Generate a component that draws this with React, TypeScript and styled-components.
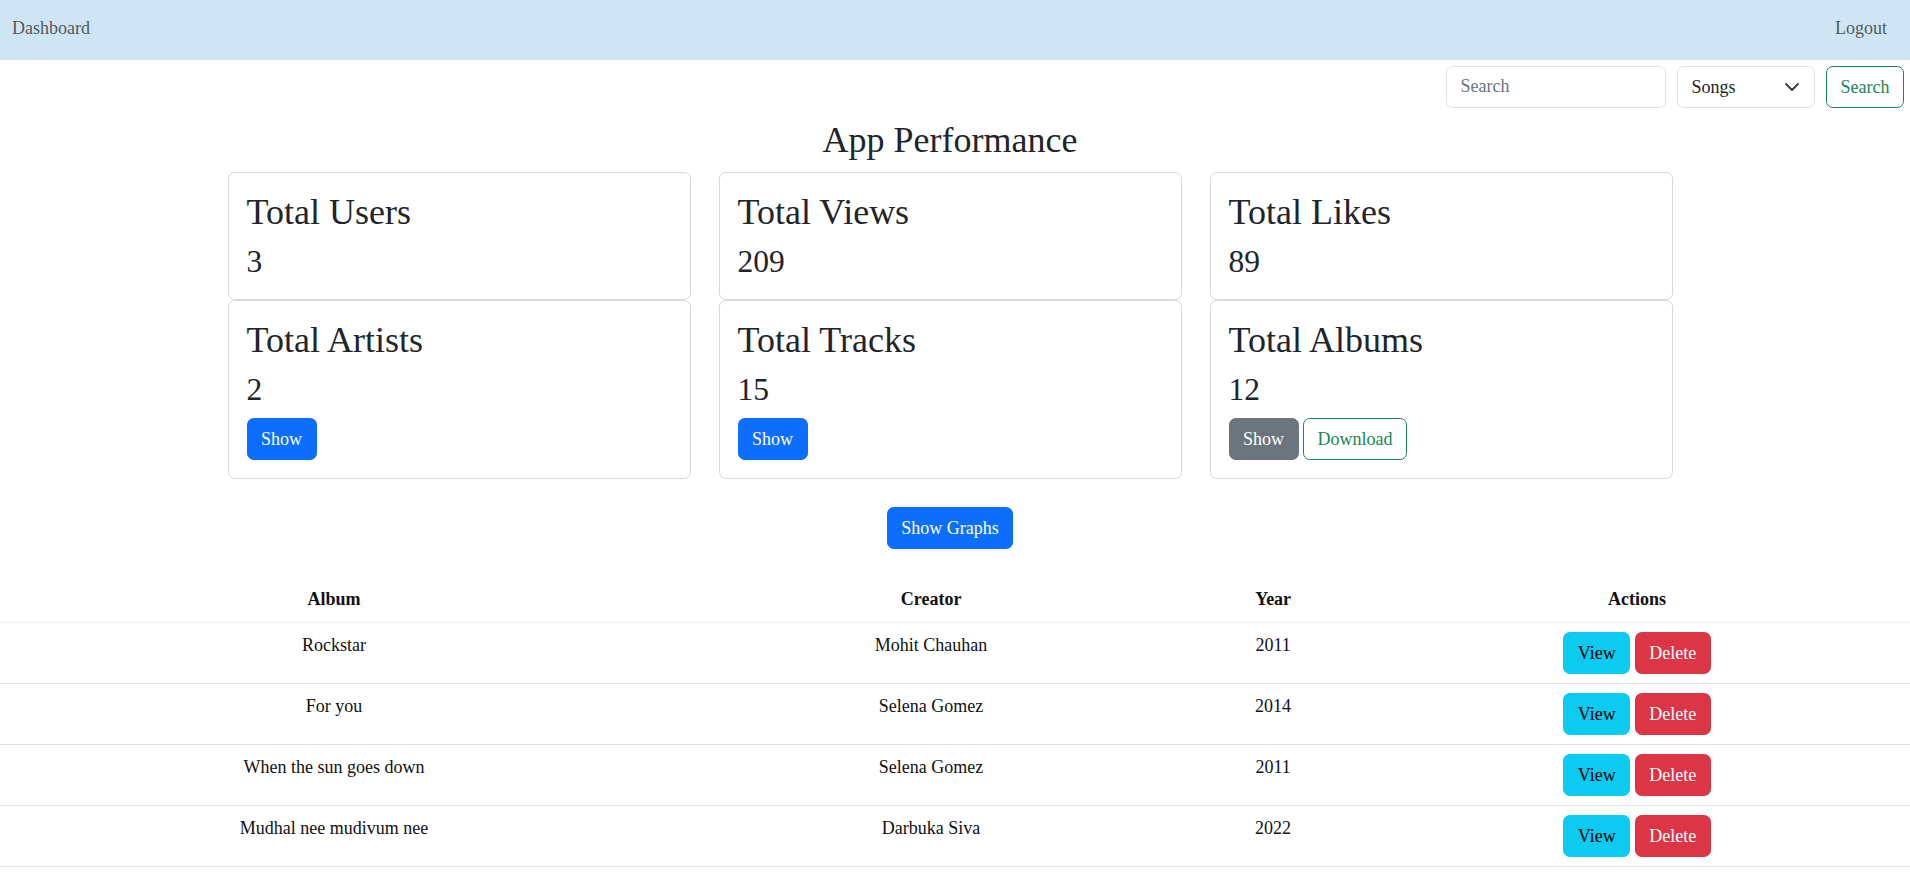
import React from 'react';
import styled, { createGlobalStyle, css } from 'styled-components';

const GlobalStyle = createGlobalStyle`
html {
  scrollbar-width: none;
}
html::-webkit-scrollbar {
  display: none;
}
body {
  margin: 0;
  font-family: "Liberation Serif", "Times New Roman", serif;
  font-size: 18px;
  line-height: 1.5;
  color: #212529;
  background: #fff;
  overflow-x: hidden;
}
*, *::before, *::after {
  box-sizing: border-box;
}
`

const serif = `"Liberation Serif", "Times New Roman", serif`;

interface Album {
    id: number;
    title: string;
    creator: string;
    year: number;
}

const albums: Album[] = [
    { id: 1, title: 'Rockstar', creator: 'Mohit Chauhan', year: 2011 },
    { id: 2, title: 'For you', creator: 'Selena Gomez', year: 2014 },
    { id: 3, title: 'When the sun goes down', creator: 'Selena Gomez', year: 2011 },
    { id: 4, title: 'Mudhal nee mudivum nee', creator: 'Darbuka Siva', year: 2022 },
    { id: 5, title: 'Revival', creator: 'Selena Gomez', year: 2015 },
    { id: 6, title: 'Rare', creator: 'Selena Gomez', year: 2020 },
];

type Variant = 'primary' | 'secondary' | 'success-outline' | 'info' | 'danger';

interface Stat {
    label: string;
    value: number;
    actions?: { text: string; variant: Variant }[];
}

const stats: Stat[] = [
    { label: 'Total Users', value: 3 },
    { label: 'Total Views', value: 209 },
    { label: 'Total Likes', value: 89 },
    { label: 'Total Artists', value: 2, actions: [{ text: 'Show', variant: 'primary' }] },
    { label: 'Total Tracks', value: 15, actions: [{ text: 'Show', variant: 'primary' }] },
    {
        label: 'Total Albums', value: 12, actions: [
            { text: 'Show', variant: 'secondary' },
            { text: 'Download', variant: 'success-outline' },
        ]
    },
];

export default function App() {
    return <>
        <GlobalStyle />
        <Navbar>
            <NavLink href="#">Dashboard</NavLink>
            <NavLink href="#">Logout</NavLink>
        </Navbar>

        <SearchBar onSubmit={e => e.preventDefault()}>
            <SearchInput type="text" placeholder="Search" />
            <SelectWrap>
                <Select defaultValue="songs">
                    <option value="songs">Songs</option>
                    <option value="albums">Albums</option>
                    <option value="artists">Artists</option>
                </Select>
                <Chevron width="14" height="8" viewBox="0 0 14 8">
                    <path d="M1 1l6 6 6-6" fill="none" stroke="#343a40" strokeWidth="1.8" strokeLinecap="round" strokeLinejoin="round" />
                </Chevron>
            </SelectWrap>
            <Button $variant="success-outline" type="submit">Search</Button>
        </SearchBar>

        <Main>
            <PageTitle>App Performance</PageTitle>
            <CardGrid>
                {stats.map(stat =>
                    <Card key={stat.label}>
                        <CardTitle>{stat.label}</CardTitle>
                        <CardValue>{stat.value}</CardValue>
                        {stat.actions && <ButtonRow>
                            {stat.actions.map(a => <Button key={a.text} $variant={a.variant}>{a.text}</Button>)}
                        </ButtonRow>}
                    </Card>
                )}
            </CardGrid>
            <GraphsRow>
                <Button $variant="primary">Show Graphs</Button>
            </GraphsRow>
        </Main>

        <Table>
            <colgroup>
                <col style={{ width: '34.76%' }} />
                <col style={{ width: '27.37%' }} />
                <col style={{ width: '8.22%' }} />
                <col style={{ width: '29.65%' }} />
            </colgroup>
            <thead>
                <tr>
                    <th>Album</th>
                    <th>Creator</th>
                    <th>Year</th>
                    <th>Actions</th>
                </tr>
            </thead>
            <tbody>
                {albums.map(album =>
                    <tr key={album.id}>
                        <td>{album.title}</td>
                        <td>{album.creator}</td>
                        <td>{album.year}</td>
                        <td>
                            <ActionCell>
                                <Button $variant="info">View</Button>
                                <Button $variant="danger">Delete</Button>
                            </ActionCell>
                        </td>
                    </tr>
                )}
            </tbody>
        </Table>
    </>
}

const Navbar = styled.nav`
height: 60px;
background: #cfe5f4;
display: flex;
justify-content: space-between;
align-items: flex-start;
padding: 15px 23px 0 12px;
`

const NavLink = styled.a`
color: rgba(0, 0, 0, 0.65);
text-decoration: none;
font-size: 18px;
line-height: 27px;
`

const SearchBar = styled.form`
display: flex;
justify-content: flex-end;
gap: 11px;
margin: 6px 6px 0 0;
`

const fieldBase = css`
height: 41.5px;
font-family: ${serif};
font-size: 18px;
font-weight: 400;
line-height: 27px;
color: #212529;
background: #fff;
border: 1px solid #dee2e6;
border-radius: 6.75px;
padding: 6.75px 13.5px;
outline: none;
`

const SearchInput = styled.input`
${fieldBase}
width: 220px;

&::placeholder {
  font-family: ${serif};
  color: #6c757d;
}
`

const SelectWrap = styled.div`
position: relative;
width: 138px;
`

const Select = styled.select`
${fieldBase}
width: 100%;
appearance: none;
padding-right: 40px;

option {
  font-family: ${serif};
}
`

const Chevron = styled.svg`
position: absolute;
right: 16px;
top: 50%;
transform: translateY(-50%);
pointer-events: none;
`

const Main = styled.main`
padding-right: 10px;
display: flex;
flex-direction: column;
align-items: center;
`

const PageTitle = styled.h2`
font-size: 36px;
font-weight: 400;
line-height: 1.2;
margin: 11px 0 10px;
`

const CardGrid = styled.div`
display: grid;
grid-template-columns: repeat(3, 463px);
column-gap: 28px;
`

const Card = styled.div`
border: 1px solid #d9d9d9;
border-radius: 6.75px;
padding: 18px;
background: #fff;
`

const CardTitle = styled.h2`
font-size: 36px;
font-weight: 400;
line-height: 1.2;
margin: 0 0 9px;
`

const CardValue = styled.h3`
font-size: 31.5px;
font-weight: 400;
line-height: 1.2;
margin: 0;
`

const ButtonRow = styled.div`
display: flex;
gap: 4.5px;
margin-top: 9px;
`

const variants: Record<Variant, ReturnType<typeof css>> = {
    'primary': css`background: #0d6efd; border-color: #0d6efd; color: #fff;`,
    'secondary': css`background: #6c757d; border-color: #6c757d; color: #fff;`,
    'success-outline': css`background: transparent; border-color: #198754; color: #198754;`,
    'info': css`background: #0dcaf0; border-color: #0dcaf0; color: #000;`,
    'danger': css`background: #dc3545; border-color: #dc3545; color: #fff;`,
};

const Button = styled.button<{ $variant: Variant }>`
font-family: ${serif};
font-size: 18px;
line-height: 27px;
padding: 6.5px 13.5px;
border: 1px solid transparent;
border-radius: 6.75px;
cursor: pointer;
white-space: nowrap;
${p => variants[p.$variant]}
`

const GraphsRow = styled.div`
margin: 28px 0;
`

const Table = styled.table`
width: 1922px;
table-layout: fixed;
border-collapse: collapse;
color: #111;

th, td {
  padding: 9px;
  text-align: center;
  vertical-align: top;
  border-bottom: 1px solid #e2e3e5;
}

th {
  font-weight: 700;
  border-bottom-color: #f1f1f1;
}
`

const ActionCell = styled.div`
display: flex;
justify-content: center;
gap: 4.5px;
`
